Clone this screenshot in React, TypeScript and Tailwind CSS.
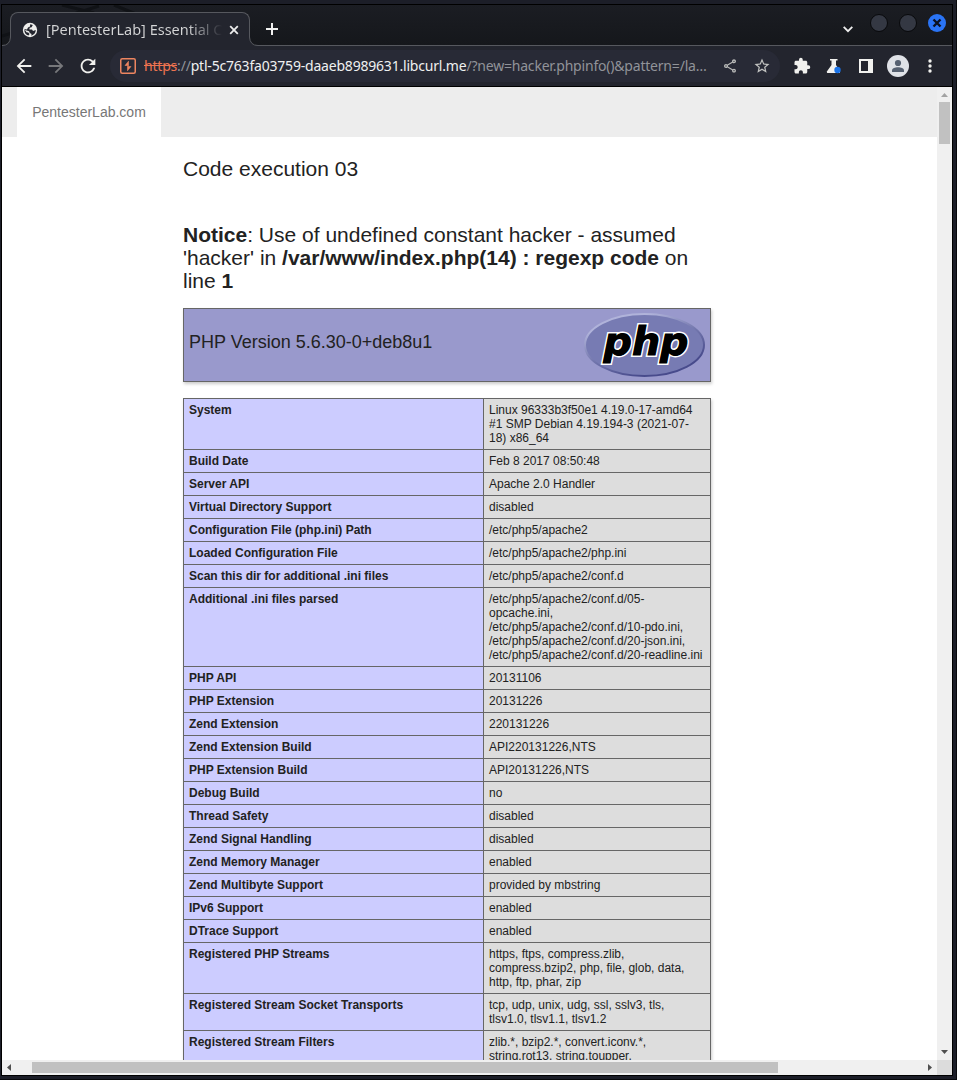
import React from "react";
import {
  MdArrowBack,
  MdArrowForward,
  MdExtension,
  MdOutlineShare,
  MdRefresh,
  MdStarOutline,
} from "react-icons/md";

const rows: [string, string][] = [
  ["System", "Linux 96333b3f50e1 4.19.0-17-amd64\n#1 SMP Debian 4.19.194-3 (2021-07-\n18) x86_64"],
  ["Build Date", "Feb 8 2017 08:50:48"],
  ["Server API", "Apache 2.0 Handler"],
  ["Virtual Directory Support", "disabled"],
  ["Configuration File (php.ini) Path", "/etc/php5/apache2"],
  ["Loaded Configuration File", "/etc/php5/apache2/php.ini"],
  ["Scan this dir for additional .ini files", "/etc/php5/apache2/conf.d"],
  [
    "Additional .ini files parsed",
    "/etc/php5/apache2/conf.d/05-\nopcache.ini,\n/etc/php5/apache2/conf.d/10-pdo.ini,\n/etc/php5/apache2/conf.d/20-json.ini,\n/etc/php5/apache2/conf.d/20-readline.ini",
  ],
  ["PHP API", "20131106"],
  ["PHP Extension", "20131226"],
  ["Zend Extension", "220131226"],
  ["Zend Extension Build", "API220131226,NTS"],
  ["PHP Extension Build", "API20131226,NTS"],
  ["Debug Build", "no"],
  ["Thread Safety", "disabled"],
  ["Zend Signal Handling", "disabled"],
  ["Zend Memory Manager", "enabled"],
  ["Zend Multibyte Support", "provided by mbstring"],
  ["IPv6 Support", "enabled"],
  ["DTrace Support", "enabled"],
  ["Registered PHP Streams", "https, ftps, compress.zlib,\ncompress.bzip2, php, file, glob, data,\nhttp, ftp, phar, zip"],
  ["Registered Stream Socket Transports", "tcp, udp, unix, udg, ssl, sslv3, tls,\ntlsv1.0, tlsv1.1, tlsv1.2"],
  ["Registered Stream Filters", "zlib.*, bzip2.*, convert.iconv.*,\nstring.rot13, string.toupper,"],
];

function TabStrip() {
  return (
    <div className="relative flex h-[41px] shrink-0 bg-linear-to-b from-[#1b1d23] to-[#15171b] pl-2 shadow-[inset_0_-1px_0_#56585e]">
      <svg className="absolute top-0 left-0" width="160" height="40" fill="none" stroke="#101216" strokeWidth="3">
        <path d="M0 31 97 1M60 0 92 8M112 0l22 9" />
      </svg>
      <svg className="absolute bottom-0 left-0 z-10" width="9" height="9">
        <path d="M0 9V8.500Q8 8.500 8.500 0H9V9Z" fill="#23252e" />
        <path d="M0 8.500Q8 8.500 8.500 0" fill="none" stroke="#56585e" />
      </svg>
      <div className="relative mt-[7px] flex h-[34px] w-[240px] shrink-0 items-start rounded-t-lg border border-b-0 border-[#56585e] bg-[#23252e] pl-[11px]">
        <svg className="mt-[9px] shrink-0" width="16" height="16" viewBox="0 0 16 16">
          <circle cx="8" cy="8" r="7.200" fill="#eeeeec" />
          <path
            d="M8.200 2.300 10.800 3 9.600 5.300 7.600 5.800 7.400 7.400H10L11 9l2.800-.9C13.700 11 11.800 13 9.300 13.700L9.500 12 7.800 10.900 7 9.200 2.400 7.700c-.3 2.900 1.500 5 4 5.900L7.600 12 6.200 10.500 4.500 10.200 2.300 6.900 5 7.400 6 5.500 8 4.600z"
            fill="#23252e"
          />
        </svg>
        <div className="mt-[5px] ml-2 w-[177px] shrink-0 overflow-hidden bg-linear-to-r from-[#d5d6d7] from-80% to-[#23252e] bg-clip-text text-[14.5px] leading-[22px] whitespace-nowrap text-transparent">
          [PentesterLab] Essential C
        </div>
        <svg className="mt-3 ml-[6px] shrink-0" width="10" height="10" stroke="#ececec" strokeWidth="1.8">
          <path d="m1.200 1.200 7.600 7.600m0-7.600-7.600 7.600" />
        </svg>
      </div>
      <svg className="absolute bottom-0 left-[247px]" width="9" height="9">
        <path d="M0 9V0H.5Q1 8.500 9 8.500V9Z" fill="#23252e" />
        <path d="M.5 0Q1 8.500 9 8.500" fill="none" stroke="#56585e" />
      </svg>
      <svg className="mt-[18px] ml-4" width="12" height="12" stroke="#f0f0f0" strokeWidth="2">
        <path d="M0 6h12M6 0v12" />
      </svg>
      <div className="mt-2 ml-auto flex items-start pr-[6px]">
        <svg className="mt-[13px] mr-[17px]" width="10" height="7" fill="none" stroke="#eeeeee" strokeWidth="1.8">
          <path d="m.7.8 4.300 4.400L9.300.8" />
        </svg>
        <div className="mt-px mr-[11px] size-[18px] rounded-full border border-[#08090b] bg-[#343843]" />
        <div className="mt-px mr-[11px] size-[18px] rounded-full border border-[#08090b] bg-[#343843]" />
        <svg className="mt-px" width="18" height="18">
          <circle cx="9" cy="9" r="9" fill="#2a74f5" />
          <path d="m5.500 5.500 7 7m0-7-7 7" stroke="#0b1120" strokeWidth="2.400" />
        </svg>
      </div>
    </div>
  );
}

function Toolbar() {
  return (
    <div className="flex h-[41px] shrink-0 items-center border-b border-black bg-[#23252e] pl-[11px]">
      <MdArrowBack className="size-[22px] text-[#f1f1ee]" />
      <MdArrowForward className="ml-[10px] size-[22px] text-[#77787b]" />
      <MdRefresh className="ml-[10px] size-[22px] text-[#f1f1ee]" />
      <div className="ml-[11px] flex h-8 w-[670px] items-center rounded-full bg-[#282a36] pl-[10px] text-sm tracking-[-0.2px]">
        <svg width="16" height="16" fill="none" stroke="#ee8560">
          <rect x=".75" y=".75" width="14.500" height="14.500" rx="1.500" strokeWidth="1.500" />
          <path d="M8.500 3.200 5 7.500h3.500zM7.500 12.800 11 8.500H7.500zM8 7v2" fill="#ee8560" strokeWidth=".6" />
        </svg>
        <div className="ml-2 w-[563px] shrink-0 whitespace-nowrap text-[#919399]">
          <span className="text-[#ee7350] line-through">https</span>://
          <span className="text-[#eff0f0]">ptl-5c763fa03759-daaeb8989631.libcurl.me</span>
          /?new=hacker.phpinfo()&amp;pattern=/la…
        </div>
        <MdOutlineShare className="ml-[15px] size-4 shrink-0 text-[#b9bab9]" />
        <MdStarOutline className="ml-[15px] size-[18px] shrink-0 text-[#c2c3c1]" />
      </div>
      <MdExtension className="ml-[13px] size-[18px] text-[#f1f1ee]" />
      <svg className="ml-[15px]" width="16" height="16" fill="#f1f1ee">
        <path d="M4 1h7.500v1.500H10V7l4 6.500V15H1.200L.7 13.800 5.500 7V2.500H4z" />
        <circle cx="11.500" cy="12" r="3.200" fill="#1a73e8" />
      </svg>
      <svg className="ml-[17px]" width="14" height="14">
        <path fill="#f1f1ee" fillRule="evenodd" d="M0 0h14v14H0zM2 2v10h7V2z" />
      </svg>
      <svg className="ml-[14px]" width="22" height="22">
        <circle cx="11" cy="11" r="11" fill="#dfe2e7" />
        <circle cx="11" cy="8" r="3.100" fill="#556070" />
        <path d="M5 17v-1.500c0-2 3-3.200 6-3.200s6 1.200 6 3.200V17z" fill="#556070" />
      </svg>
      <svg className="ml-[19px]" width="4" height="14" fill="#f1f1ee">
        <circle cx="2" cy="2" r="1.700" />
        <circle cx="2" cy="7" r="1.700" />
        <circle cx="2" cy="12" r="1.700" />
      </svg>
    </div>
  );
}

function PhpLogo() {
  const word = {
    x: 19.5,
    y: 42.5,
    textLength: 85,
    lengthAdjust: "spacingAndGlyphs" as const,
    fontFamily: "DejaVu Sans, sans-serif",
    fontWeight: 700,
    fontStyle: "italic",
    fontSize: 39,
    strokeLinejoin: "miter" as const,
  };
  return (
    <svg width="122" height="66" viewBox="0 0 122 66">
      <defs>
        <linearGradient id="rim" x1="0.2" y1="0" x2="0.8" y2="1">
          <stop offset="0.15" stopColor="#b0b3da" />
          <stop offset="0.5" stopColor="#7377ad" />
          <stop offset="0.85" stopColor="#484b8c" />
        </linearGradient>
      </defs>
      <ellipse cx="60.500" cy="33" rx="59.500" ry="31" fill="#777bb3" stroke="url(#rim)" strokeWidth="2" />
      <text {...word} fill="#000" stroke="#fff" strokeWidth="4" paintOrder="stroke">
        php
      </text>
      <text {...word} fill="#000" stroke="#000" strokeWidth="1" aria-hidden="true">
        php
      </text>
    </svg>
  );
}

function Page() {
  return (
    <div className="min-w-0 flex-1 overflow-hidden bg-white text-[#222222]">
      <div className="flex h-[50px] bg-[#ededed] pl-[15px]">
        <div className="flex w-36 items-center justify-center bg-white text-sm text-[#777777]">PentesterLab.com</div>
      </div>
      <div className="ml-[181px] w-[528px] pt-5">
        <div className="text-[21px] leading-[23px]">Code execution 03</div>
        <div className="mt-[43px] text-[21px] leading-[23px] whitespace-nowrap">
          <b>Notice</b>: Use of undefined constant hacker - assumed
          <br />
          'hacker' in <b>/var/www/index.php(14) : regexp code</b> on
          <br />
          line <b>1</b>
        </div>
        <div className="mt-4 flex h-[74px] justify-between border border-[#666666] bg-[#9999cc] pt-[3px] pr-1 pl-[5px] shadow-[1px_2px_3px_#cccccc]">
          <div className="mt-[20px] text-[18px] leading-5">PHP Version 5.6.30-0+deb8u1</div>
          <PhpLogo />
        </div>
        <div className="mt-4 border-x border-[#666666] text-xs leading-[14px] shadow-[1px_2px_3px_#cccccc]">
          {rows.map(([name, value]) => (
            <div key={name} className="flex border-t border-[#666666]">
              <div className="w-[300px] shrink-0 border-r border-[#666666] bg-[#ccccff] py-1 pl-[5px] font-bold">{name}</div>
              <div className="flex-1 bg-[#dddddd] py-1 pl-[5px] whitespace-pre">{value}</div>
            </div>
          ))}
        </div>
      </div>
    </div>
  );
}

export default function App() {
  return (
    <div className="h-[1080px] w-[957px] overflow-hidden border-r border-b border-[#08090c] bg-[#1c1e28] pt-1 font-['Noto_Sans',sans-serif]">
      <div className="ml-px flex h-[1072px] w-[952px] flex-col border border-black">
        <TabStrip />
        <Toolbar />
        <div className="flex min-h-0 flex-1 flex-col font-['Liberation_Sans',sans-serif]">
          <div className="flex min-h-0 flex-1">
            <Page />
            <div className="flex w-[15px] shrink-0 flex-col items-center bg-[#f0f0f0]">
              <svg className="mt-[6px] shrink-0" width="7" height="4" fill="#a3a3a3">
                <path d="M0 4 3.500 0 7 4z" />
              </svg>
              <div className="mt-[5px] h-[42px] w-[11px] shrink-0 bg-[#c1c1c1]" />
              <svg className="mt-auto mb-[6px] shrink-0" width="7" height="4" fill="#505050">
                <path d="M0 0h7L3.500 4z" />
              </svg>
            </div>
          </div>
          <div className="flex h-[15px] shrink-0 items-center bg-[#f0f0f0]">
            <svg className="ml-[5px]" width="4" height="7" fill="#505050">
              <path d="M4 0v7L0 3.500z" />
            </svg>
            <div className="ml-[21px] h-[11px] w-[746px] bg-[#c1c1c1]" />
            <svg className="mr-[5px] ml-auto" width="4" height="7" fill="#505050">
              <path d="M0 0l4 3.500L0 7z" />
            </svg>
            <div className="size-[15px] bg-[#dcdcdc]" />
          </div>
        </div>
      </div>
    </div>
  );
}
